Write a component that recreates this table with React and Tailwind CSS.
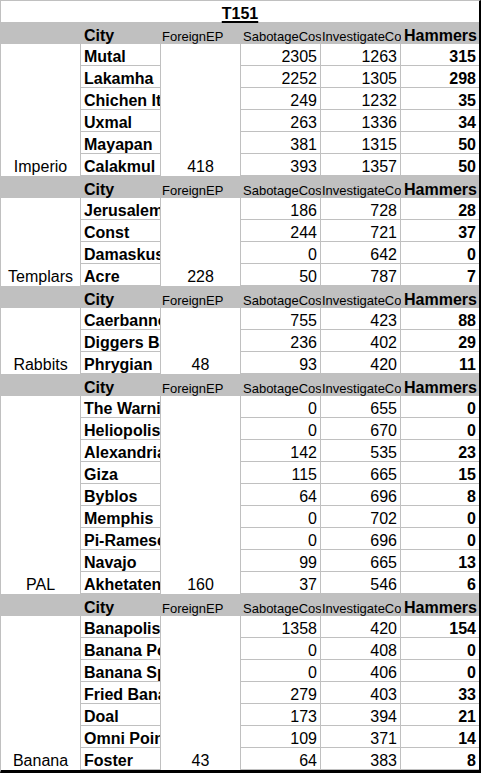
import React from 'react';

const groups = [
  {
    name: 'Imperio',
    ep: 418,
    rows: [
      ['Mutal', 2305, 1263, 315],
      ['Lakamha', 2252, 1305, 298],
      ['Chichen Itza', 249, 1232, 35],
      ['Uxmal', 263, 1336, 34],
      ['Mayapan', 381, 1315, 50],
      ['Calakmul', 393, 1357, 50],
    ],
  },
  {
    name: 'Templars',
    ep: 228,
    rows: [
      ['Jerusalem', 186, 728, 28],
      ['Const', 244, 721, 37],
      ['Damaskus', 0, 642, 0],
      ['Acre', 50, 787, 7],
    ],
  },
  {
    name: 'Rabbits',
    ep: 48,
    rows: [
      ['Caerbannog', 755, 423, 88],
      ['Diggers Base', 236, 402, 29],
      ['Phrygian', 93, 420, 11],
    ],
  },
  {
    name: 'PAL',
    ep: 160,
    rows: [
      ['The Warning', 0, 655, 0],
      ['Heliopolis', 0, 670, 0],
      ['Alexandria', 142, 535, 23],
      ['Giza', 115, 665, 15],
      ['Byblos', 64, 696, 8],
      ['Memphis', 0, 702, 0],
      ['Pi-Rameses', 0, 696, 0],
      ['Navajo', 99, 665, 13],
      ['Akhetaten', 37, 546, 6],
    ],
  },
  {
    name: 'Banana',
    ep: 43,
    rows: [
      ['Banapolis', 1358, 420, 154],
      ['Banana Port', 0, 408, 0],
      ['Banana Split', 0, 406, 0],
      ['Fried Banana', 279, 403, 33],
      ['Doal', 173, 394, 21],
      ['Omni Point', 109, 371, 14],
      ['Foster', 64, 383, 8],
    ],
  },
];

const HeaderRow = () => (
  <div className="flex h-[22px] bg-[#c0c0c0] items-end">
    <div className="w-[80px]" />
    <div className="w-[80px] pl-[3px] font-bold text-[16px] leading-[16px]">City</div>
    <div className="w-[80px] pl-[1px] text-[13px] leading-[14px] overflow-hidden whitespace-nowrap">ForeignEP</div>
    <div className="w-[80px] pl-[2px] text-[13px] leading-[14px] overflow-hidden whitespace-nowrap">SabotageCost</div>
    <div className="w-[80px] pl-[1px] text-[13px] leading-[14px] overflow-hidden whitespace-nowrap">InvestigateCost</div>
    <div className="w-[78px] pl-[3px] font-bold text-[16px] leading-[16px] overflow-hidden whitespace-nowrap">Hammers</div>
  </div>
);

const NumCol = ({ values, bold, last }) => (
  <div className={`flex flex-col ${last ? 'w-[78px]' : 'w-[80px]'}`}>
    {values.map((v, i) => (
      <div
        key={i}
        className={`h-[22px] border-b border-[#c0c0c0] flex items-end justify-end pr-[3px] text-[16px] leading-[16px] ${
          last ? '' : 'border-r'
        } ${bold ? 'font-bold' : ''}`}
      >
        {v}
      </div>
    ))}
  </div>
);

const Group = ({ group }) => (
  <div>
    <HeaderRow />
    <div className="flex">
      <div className="w-[80px] border-r border-[#c0c0c0] flex items-end justify-center pb-[1px] text-[16px] leading-[16px]">
        {group.name}
      </div>
      <div className="w-[80px] flex flex-col">
        {group.rows.map((r) => (
          <div
            key={r[0]}
            className="h-[22px] border-r border-b border-[#c0c0c0] flex items-end pl-[3px] font-bold text-[16px] leading-[16px] overflow-hidden whitespace-nowrap"
          >
            {r[0]}
          </div>
        ))}
      </div>
      <div className="w-[80px] border-r border-[#c0c0c0] flex items-end justify-center pb-[1px] text-[16px] leading-[16px]">
        {group.ep}
      </div>
      <NumCol values={group.rows.map((r) => r[1])} />
      <NumCol values={group.rows.map((r) => r[2])} />
      <NumCol values={group.rows.map((r) => r[3])} bold last />
    </div>
  </div>
);

const App = () => {
  return (
    <div className="w-[481px] h-[773px] bg-white text-black font-['Liberation_Sans',Arial,sans-serif] border-t border-l border-[#c0c0c0] border-r-2 border-r-black border-b-[3px] border-b-black">
      <div className="h-[21px] flex items-end justify-center">
        <span className="font-bold text-[16px] leading-[16px] underline decoration-2 underline-offset-[2px]">T151</span>
      </div>
      {groups.map((g) => (
        <Group key={g.name} group={g} />
      ))}
    </div>
  );
};

export default App;
